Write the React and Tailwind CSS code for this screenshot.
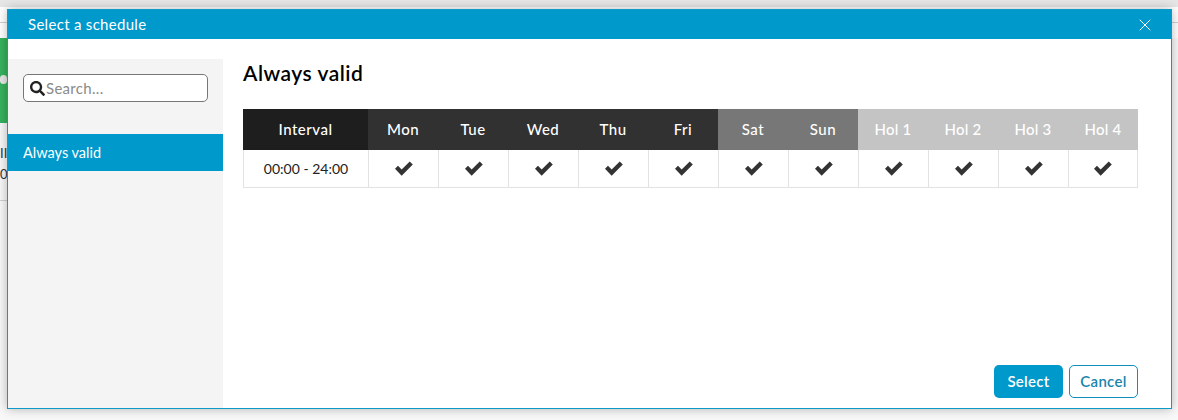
import React from 'react';
import { FaSearch } from 'react-icons/fa';
import { X } from 'lucide-react';

const weekdays = ['Mon', 'Tue', 'Wed', 'Thu', 'Fri'];
const weekend = ['Sat', 'Sun'];
const holidays = ['Hol 1', 'Hol 2', 'Hol 3', 'Hol 4'];
const allDays = [...weekdays, ...weekend, ...holidays];

const CheckMark = () => (
  <svg width="18" height="15" viewBox="0 0 17 14" fill="currentColor">
    <polygon points="0,7.2 2.8,4.4 6.3,7.9 13.9,0.4 16.8,3.2 6.3,13.8" />
  </svg>
);

const HeadCell = ({ label, className }) => (
  <div className={`flex items-center justify-center h-[41px] text-[15px] font-medium tracking-[0.5px] ${className}`}>
    {label}
  </div>
);

const App = () => {
  return (
    <div className="relative w-[1178px] h-[420px] overflow-hidden bg-[#f8f8f8] font-['Lato',sans-serif]">
      {/* Page behind the dialog */}
      <div className="h-[7px] bg-[#e6e6e6]" />
      <div className="h-[15px] bg-white border-b border-[#d0d0d0] box-content" />
      <div className="h-[15px] bg-white" />
      <div className="relative h-[85px] w-[8px] bg-[#35b25e]">
        <div className="absolute left-0 top-[37px] w-[7px] h-[9px] rounded-full bg-[#e8e8e8]" />
      </div>
      <div className="w-[8px] pt-[20px] text-[13px] leading-[21px] text-[#333]">
        <div>II</div>
        <div>01</div>
      </div>
      <div className="w-[8px] mt-[15px] border-b border-[#d0d0d0]" />

      {/* Dialog */}
      <div className="absolute left-[7px] top-[9px] w-[1165px] h-[400px] flex flex-col bg-white border border-[#0e9ac8] shadow-[0_0_10px_rgba(0,0,0,0.28)]">
        <div className="flex items-center justify-between h-[29px] shrink-0 bg-[#0099cc] pl-[20px] pr-[16px] text-white">
          <span className="text-[15px] tracking-[0.3px]">Select a schedule</span>
          <X size={20} strokeWidth={1.2} />
        </div>

        <div className="flex flex-1 pt-[20px] min-h-0">
          {/* Schedule list */}
          <div className="w-[215px] shrink-0 bg-[#f4f4f4] pt-[15px]">
            <div className="mx-[15px] h-[28px] flex items-center gap-[1px] pl-[6px] bg-white border border-[#777] rounded-[5px]">
              <FaSearch className="text-[#222] w-[15px] h-[15px]" />
              <span className="text-[15px] tracking-[0.3px] text-[#8a8a8a]">Search...</span>
            </div>
            <div className="mt-[32px] h-[37px] flex items-center pl-[15px] bg-[#0099cc] text-white text-[14.5px]">
              Always valid
            </div>
          </div>

          {/* Schedule detail */}
          <div className="flex-1 flex flex-col pl-[20px] pr-[33px] pb-[10px]">
            <h2 className="text-[21px] leading-[28px] font-semibold tracking-[0.5px] text-black">Always valid</h2>
            <div className="mt-[22px] grid grid-cols-[125px_repeat(11,70px)] text-white">
              <HeadCell label="Interval" className="bg-[#1e1e1e]" />
              {weekdays.map((d) => <HeadCell key={d} label={d} className="bg-[#313131]" />)}
              {weekend.map((d) => <HeadCell key={d} label={d} className="bg-[#777777]" />)}
              {holidays.map((d) => <HeadCell key={d} label={d} className="bg-[#c4c4c4] !tracking-[0.2px]" />)}
              <div className="flex items-center justify-center h-[38px] border-b border-l border-[#e2e2e2] text-[14px] text-[#222]">
                00:00 - 24:00
              </div>
              {allDays.map((d) => (
                <div key={d} className="flex items-center justify-center h-[38px] border-b border-l last:border-r border-[#e2e2e2] text-[#333]">
                  <CheckMark />
                </div>
              ))}
            </div>
            <div className="mt-auto flex justify-end gap-[6px]">
              <button className="w-[69px] h-[33px] rounded-[5px] bg-[#0099cc] text-white text-[15px] font-semibold tracking-[0.3px]">Select</button>
              <button className="w-[69px] h-[33px] rounded-[5px] bg-white border border-[#0e8fbc] text-[#1a85ad] text-[15px] font-semibold tracking-[0.3px]">Cancel</button>
            </div>
          </div>
        </div>
      </div>
    </div>
  );
};

export default App;
